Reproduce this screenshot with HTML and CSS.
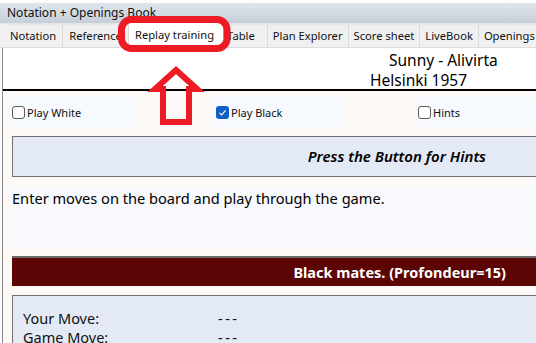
FILE: index.html
```html
<!doctype html>
<html lang="en">
<head>
  <meta charset="utf-8" />
  <title>Notation + Openings Book</title>
  <link rel="stylesheet" href="styles.css">
</head>
<body>
  <div class="window">
    <div class="titlebar">Notation + Openings Book</div>

    <div class="tabs">
      <div class="tab">Notation</div>
      <div class="tab">Reference</div>
      <div class="tab active">Replay training</div>
      <div class="tab tab-table">Table</div>
      <div class="tab">Plan Explorer</div>
      <div class="tab">Score sheet</div>
      <div class="tab">LiveBook</div>
      <div class="tab">Openings</div>
    </div>

    <div class="pane">
      <div class="game-head">
        <div class="players">Sunny - Alivirta</div>
        <div class="event">Helsinki 1957</div>
      </div>

      <div class="content">
        <div class="options">
          <label class="opt opt-white"><span class="box"></span>Play White</label>
          <label class="opt opt-black"><span class="box checked">
            <svg viewBox="0 0 13 13" width="13" height="13"><polyline points="3.5,6.8 5.6,8.9 9.6,4.4" fill="none" stroke="#fff" stroke-width="1.2" /></svg>
          </span>Play Black</label>
          <label class="opt opt-hints"><span class="box"></span>Hints</label>
        </div>

        <div class="hint-box">Press the Button for Hints</div>

        <div class="message">Enter moves on the board and play through the game.</div>

        <div class="result">Black mates. (Profondeur=15)</div>

        <div class="moves">
          <div class="move-row"><span class="move-label">Your Move:</span><span class="dash">---</span></div>
          <div class="move-row"><span class="move-label">Game Move:</span><span class="dash">---</span></div>
        </div>
      </div>
    </div>
  </div>

  <svg class="markup" viewBox="0 0 536 343" width="536" height="343">
    <rect x="121.5" y="19.5" width="105.5" height="29" rx="10" ry="10" fill="none" stroke="#ed1c24" stroke-width="7" />
    <polygon points="176,70 197,89 189,89 189,122 163,122 163,89 155,89" fill="none" stroke="#ed1c24" stroke-width="6" stroke-linejoin="miter" />
  </svg>
</body>
</html>
```

FILE: styles.css
```css
body {
  margin: 0;
  width: 536px;
  height: 343px;
  overflow: hidden;
  background: #fbfbfb;
  font-family: "Noto Sans", "Open Sans", sans-serif;
  color: #000;
  position: relative;
}

.window {
  padding-top: 3px;
  width: 620px;
}

.titlebar {
  height: 20px;
  line-height: 19px;
  padding-left: 7px;
  font-size: 12px;
  color: #111;
  background: linear-gradient(to bottom, #dfe5ec, #c6cfda);
}

.tabs {
  display: flex;
  height: 23px;
  background: #f0f0f0;
  border-top: 1px solid #e4e4e4;
  border-bottom: 1px solid #dcdcdc;
  padding-left: 4px;
}

.tab {
  padding: 0 6px;
  font-size: 11.2px;
  line-height: 22px;
  color: #111;
  border-right: 1px solid #d9d9d9;
  border-top: 1px solid #e8e8e8;
  white-space: nowrap;
}

.tab.active {
  background: #fff;
  margin-top: -2px;
  line-height: 24px;
  padding: 0 9px 0 6px;
}

.tab.tab-table {
  padding: 0 12px 0 3px;
}

.tab.tab-table ~ .tab {
  padding: 0 5px;
}

.pane {
  background: #fff;
  margin-left: 2px;
  border-left: 1px solid #8a8a8a;
  height: 300px;
}

.game-head {
  height: 43px;
  border-bottom: 2px solid #000;
  font-size: 15.5px;
  line-height: 20px;
  padding-top: 2px;
  box-sizing: border-box;
}

.players {
  padding-left: 386px;
}

.event {
  padding-left: 367px;
}

.content {
  background: #fdf9f6;
  padding: 6px 0 0 9px;
  height: 260px;
}

.options {
  display: flex;
  height: 30px;
}

.opt {
  display: flex;
  align-items: center;
  gap: 2px;
  background: #f6f9fe;
  font-size: 11px;
  color: #111;
}

.opt-white {
  width: 120px;
}

.opt-black {
  width: 123px;
  margin-left: 80px;
  padding-left: 4px;
}

.opt-hints {
  margin-left: 79px;
  width: 150px;
}

.box {
  width: 11px;
  height: 11px;
  border: 1px solid #5a5a5a;
  border-radius: 3px;
  background: #fff;
  display: flex;
}

.box.checked {
  width: 13px;
  height: 13px;
  border: none;
  background: #0f5fc4;
}

.hint-box {
  margin-top: 9px;
  height: 39px;
  border: 1px solid #707070;
  background: #e3eaf5;
  font-style: italic;
  font-weight: 600;
  font-size: 15px;
  line-height: 39px;
  text-align: right;
  padding-right: 133px;
}

.message {
  margin-top: 9px;
  height: 62px;
  background: #f7f9fd;
  font-size: 14.6px;
  line-height: 24px;
}

.result {
  margin-top: 8px;
  height: 28px;
  border-top: 2px solid #6a6a6a;
  background: #5c0505;
  color: #fff;
  font-weight: bold;
  font-size: 14.5px;
  line-height: 28px;
  text-align: right;
  padding-right: 114px;
}

.moves {
  margin-top: 9px;
  height: 60px;
  border: 1px solid #707070;
  background: #e3eaf5;
  padding: 13px 0 0 10px;
  font-size: 14.5px;
  color: #111;
}

.move-row {
  display: flex;
  line-height: 19px;
}

.move-label {
  width: 195px;
}

.dash {
  letter-spacing: 2.5px;
}

.markup {
  position: absolute;
  top: 0;
  left: 0;
  pointer-events: none;
}
```
